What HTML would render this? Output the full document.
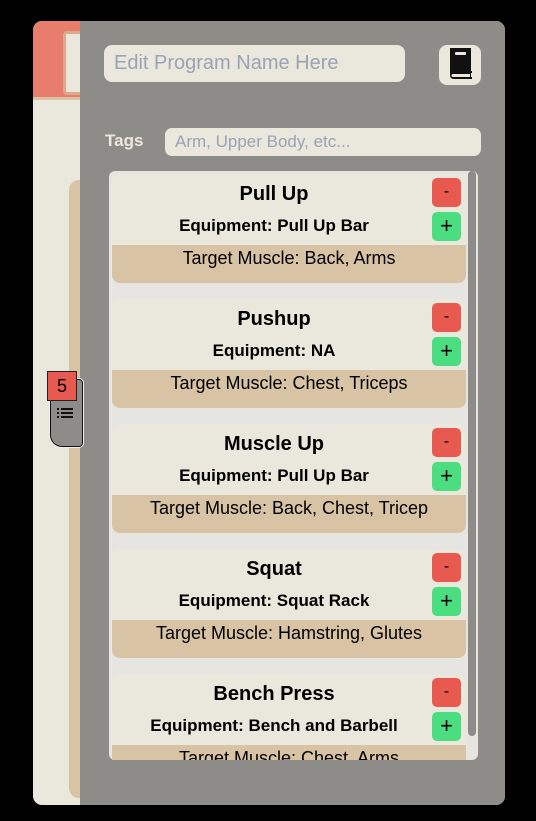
<!DOCTYPE html><html><head><style>
body{margin:0;width:536px;height:821px;background:#000;position:relative;overflow:hidden;font-family:"Liberation Sans",Roboto,sans-serif}
.abs{position:absolute}
.app{left:33px;top:21px;width:472px;height:784px;background:#eae7dd;border-radius:9px;overflow:hidden}
.card{position:absolute;left:112px;width:354px;height:109px;background:#eae7dd;border-radius:8px;overflow:hidden}
.card .t{position:absolute;left:0;width:324px;top:9px;text-align:center;font-weight:bold;font-size:20px;color:#000}
.card .e{position:absolute;left:0;width:324px;top:42px;text-align:center;font-weight:bold;font-size:17px;color:#000}
.card .m{position:absolute;left:0;right:0;top:71px;height:38px;background:#d8c3a5;text-align:center;font-size:18px;line-height:27px;color:#000}
.btn{position:absolute;left:320px;width:29px;height:29px;border-radius:5px;text-align:center;line-height:27px;font-size:16px;color:#000}
.mi{top:4px;background:#e85a50}.pl{top:38px;background:#4ade80;font-size:22px}
</style></head><body>
<div class="abs app">
 <div class="abs" style="left:0;top:0;width:472px;height:76px;background:#e87d6e"></div>
 <div class="abs" style="left:0;top:76px;width:472px;height:3px;background:#dcc2a4"></div>
 <div class="abs" style="left:30px;top:10px;width:40px;height:58px;border:3px solid #dcaa8e;background:#eae7dd;border-radius:4px"></div>
 <div class="abs" style="left:36px;top:159px;width:30px;height:618px;background:#d8c3a5;border-radius:10px"></div>
 <div class="abs" style="left:47px;top:0;width:425px;height:784px;background:#8e8c88"></div>
</div>
<div class="abs" style="left:50px;top:379px;width:31px;height:66px;background:#8e8c88;border:1.5px solid #111;border-radius:0 4px 4px 12px;box-shadow:0 0 0 1px #eee"></div>
<div class="abs" style="left:47px;top:371px;width:28px;height:28px;background:#e85a50;border:1px solid #222;text-align:center;font-size:18px;line-height:28px;color:#000">5</div>
<div class="abs" style="left:57px;top:406px;width:16px;height:12px">
<svg width="16" height="12"><g fill="#111"><rect x="0" y="1" width="2" height="2"/><rect x="4" y="1" width="12" height="2"/><rect x="0" y="5" width="2" height="2"/><rect x="4" y="5" width="12" height="2"/><rect x="0" y="9" width="2" height="2"/><rect x="4" y="9" width="12" height="2"/></g></svg></div>
<div class="abs" style="left:104px;top:45px;width:301px;height:37px;background:#eae7dd;border-radius:8px;font-size:20px;line-height:37px;color:#9ba3b4;text-indent:10px">Edit Program Name Here</div>
<div class="abs" style="left:439px;top:45px;width:42px;height:40px;background:#eae7dd;border-radius:8px">
<svg width="42" height="40"><path d="M11 3h21v24H14q-3 0-3 3z" fill="#111"/><rect x="16" y="7" width="11" height="3" rx="1" fill="#eae7dd"/><path d="M11 30q0 4 4 4h18v-2h-1v-4h1v-2H14q-3 0-3 4z" fill="#111"/><path d="M14 29h17v3H14q-1.5 0-1.5-1.5T14 29z" fill="#eae7dd"/></svg></div>
<div class="abs" style="left:105px;top:131px;font-weight:bold;font-size:17px;color:#ede8dc">Tags</div>
<div class="abs" style="left:165px;top:128px;width:316px;height:28px;background:#eae7dd;border-radius:7px;font-size:17px;line-height:28px;color:#9ba3b4;text-indent:10px">Arm, Upper Body, etc...</div>
<div class="abs" style="left:109px;top:171px;width:369px;height:589px;background:#e6e5e1;border-radius:6px;overflow:hidden">
 <div class="abs" style="left:359px;top:0;width:8px;height:565px;background:#8e8c88;border-radius:4px"></div>
</div>
<div class="abs" style="left:109px;top:171px;width:369px;height:589px;overflow:hidden">
<div style="position:relative;left:-109px;top:-171px">
<div class="card" style="top:174px"><div class="t">Pull Up</div><div class="e">Equipment: Pull Up Bar</div><div class="m">Target Muscle: Back, Arms</div><div class="btn mi">-</div><div class="btn pl">+</div></div>
<div class="card" style="top:299px"><div class="t">Pushup</div><div class="e">Equipment: NA</div><div class="m">Target Muscle: Chest, Triceps</div><div class="btn mi">-</div><div class="btn pl">+</div></div>
<div class="card" style="top:424px"><div class="t">Muscle Up</div><div class="e">Equipment: Pull Up Bar</div><div class="m">Target Muscle: Back, Chest, Tricep</div><div class="btn mi">-</div><div class="btn pl">+</div></div>
<div class="card" style="top:549px"><div class="t">Squat</div><div class="e">Equipment: Squat Rack</div><div class="m">Target Muscle: Hamstring, Glutes</div><div class="btn mi">-</div><div class="btn pl">+</div></div>
<div class="card" style="top:674px"><div class="t">Bench Press</div><div class="e">Equipment: Bench and Barbell</div><div class="m">Target Muscle: Chest, Arms</div><div class="btn mi">-</div><div class="btn pl">+</div></div>
</div></div>
</body></html>
